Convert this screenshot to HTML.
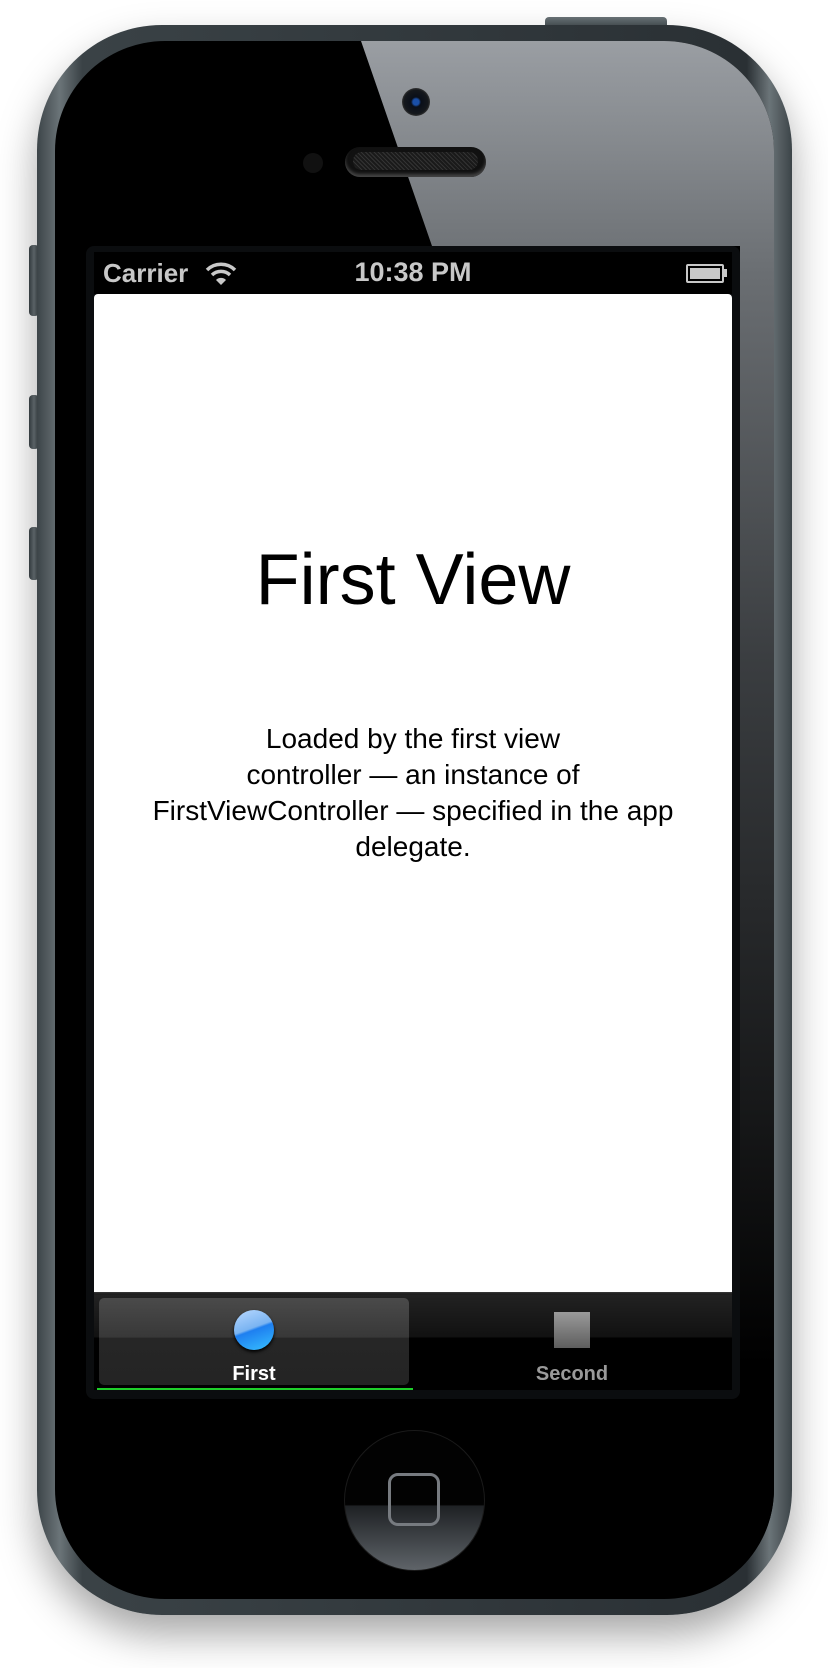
<!DOCTYPE html>
<html><head><meta charset="utf-8"><style>
*{margin:0;padding:0;box-sizing:border-box}
body{width:828px;height:1668px;background:#fff;position:relative;overflow:hidden;font-family:"Liberation Sans",Arial,sans-serif}
.abs{position:absolute}
.body{left:37px;top:25px;width:755px;height:1590px;border-radius:125px;background:linear-gradient(90deg,#3c4448,#6b7478 3%,#3a4246 6%,#2a3034 94%,#6b7478 97%,#3c4448);box-shadow:0 20px 40px rgba(0,0,0,.35)}
.face{left:55px;top:41px;width:719px;height:1558px;border-radius:110px;background:#000;overflow:hidden}
.btn{background:linear-gradient(90deg,#3a4246,#6a7478,#3a4246);border-radius:4px}
</style></head><body>
<div class="abs btn" style="left:545px;top:17px;width:122px;height:12px;border-radius:4px 4px 0 0;background:linear-gradient(#6a7478,#3c4448)"></div>
<div class="abs btn" style="left:29px;top:245px;width:10px;height:71px"></div>
<div class="abs btn" style="left:29px;top:395px;width:10px;height:54px"></div>
<div class="abs btn" style="left:29px;top:527px;width:10px;height:53px"></div>
<div class="abs body"></div>
<div class="abs face">
  <div class="abs" style="left:0;top:0;width:719px;height:1558px;background:linear-gradient(#9a9ea3,#6a6e72 15%,#3a3d40 40%,#151617 70%,#000 85%);clip-path:polygon(306px 0,719px 0,719px 1558px,685px 1558px,685px 205px,377px 205px)"></div>
</div>
<div class="abs" style="left:402px;top:88px;width:28px;height:28px;border-radius:50%;background:radial-gradient(circle,#1a4fa8 0 3px,#0a0f1a 5px,#15181c 12px,#333 14px)"></div>
<div class="abs" style="left:303px;top:153px;width:20px;height:20px;border-radius:50%;background:#111"></div>
<div class="abs" style="left:345px;top:147px;width:141px;height:30px;border-radius:15px;background:#111;box-shadow:inset 0 -3px 3px #444"><div style="margin:5px 8px;height:18px;border-radius:9px;background:repeating-linear-gradient(45deg,#333 0 1px,#1a1a1a 1px 3px)"></div></div>
<div class="abs" style="left:86px;top:246px;width:654px;height:1153px;border-radius:8px;background:#0b0d0f"></div>
<div class="abs" style="left:94px;top:252px;width:638px;height:42px;background:#000"></div>
<div class="abs" style="left:103px;top:258px;color:#c8c8c8;font-weight:bold;font-size:26px">Carrier</div>
<svg class="abs" style="left:205px;top:262px" width="32" height="24" viewBox="0 0 32 24"><path d="M2 8a20 20 0 0 1 28 0" stroke="#c8c8c8" stroke-width="3.5" fill="none"/><path d="M7 13a13 13 0 0 1 18 0" stroke="#c8c8c8" stroke-width="3.5" fill="none"/><path d="M11 18a7 7 0 0 1 10 0L16 23z" fill="#c8c8c8"/></svg>
<div class="abs" style="left:313px;top:257px;width:200px;text-align:center;color:#c8c8c8;font-weight:bold;font-size:27px">10:38 PM</div>
<div class="abs" style="left:686px;top:264px;width:38px;height:19px;border:2px solid #c8c8c8;border-radius:2px;padding:2px"><div style="width:100%;height:100%;background:#c8c8c8"></div></div>
<div class="abs" style="left:724px;top:269px;width:3px;height:8px;background:#c8c8c8"></div>
<div class="abs" style="left:94px;top:294px;width:638px;height:998px;background:#fff;border-radius:4px 4px 0 0"></div>
<div class="abs" style="left:94px;top:544px;width:638px;text-align:center;font-size:72px;color:#000;line-height:72px">First View</div>
<div class="abs" style="left:94px;top:721px;width:638px;text-align:center;font-size:28px;line-height:36px;color:#000">Loaded by the first view<br>controller — an instance of<br>FirstViewController — specified in the app<br>delegate.</div>
<div class="abs" style="left:94px;top:1292px;width:638px;height:98px;background:linear-gradient(#3a3a3a 0,#1c1c1c 2px,#222 3px,#111 45px,#000 46px,#000)"></div>
<div class="abs" style="left:99px;top:1298px;width:310px;height:87px;border-radius:5px;background:linear-gradient(#4a4a4a,#383838 45%,#262626 46%,#242424)"></div>
<div class="abs" style="left:97px;top:1388px;width:316px;height:2px;background:#1ecf2a"></div>
<div class="abs" style="left:234px;top:1310px;width:40px;height:40px;border-radius:50%;background:linear-gradient(160deg,#b8d8ff,#7ab4f2 45%,#1e7ff0 50%,#37c0ff);box-shadow:0 2px 3px #000"></div>
<div class="abs" style="left:554px;top:1312px;width:36px;height:36px;background:linear-gradient(#9a9a9a,#5e5e5e)"></div>
<div class="abs" style="left:154px;top:1363px;width:200px;text-align:center;color:#fff;font-weight:bold;font-size:20px">First</div>
<div class="abs" style="left:472px;top:1363px;width:200px;text-align:center;color:#9a9a9a;font-weight:bold;font-size:20px">Second</div>
<div class="abs" style="left:344px;top:1430px;width:141px;height:141px;border-radius:50%;background:linear-gradient(#020202 53%,#1e2124 54%,#5f6469);border:1px solid #1a1a1a"></div>
<div class="abs" style="left:388px;top:1473px;width:52px;height:53px;border-radius:10px;border:3px solid #777b80"></div>
</body></html>
